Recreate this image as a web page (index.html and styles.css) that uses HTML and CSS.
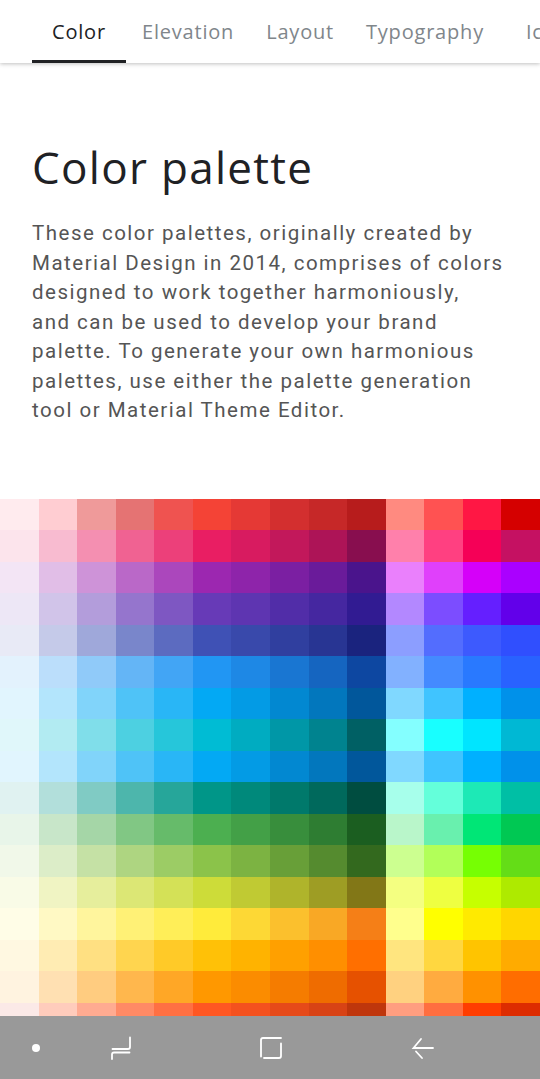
FILE: index.html
```html
<!DOCTYPE html>
<html lang="en">
<head>
<meta charset="utf-8">
<title>Color palette</title>
<link rel="stylesheet" href="styles.css">
</head>
<body>
<header class="tabbar">
  <div class="tab tab-active">Color</div>
  <div class="tab">Elevation</div>
  <div class="tab">Layout</div>
  <div class="tab">Typography</div>
  <div class="tab tab-last">Iconography</div>
</header>
<main class="content">
  <h1 class="title">Color palette</h1>
  <p class="intro">These color palettes, originally created by<br>
  Material Design in 2014, comprises of colors<br>
  designed to work together harmoniously,<br>
  and can be used to develop your brand<br>
  palette. To generate your own harmonious<br>
  palettes, use either the palette generation<br>
  tool or Material Theme Editor.</p>
</main>
<section class="palette" id="palette"></section>
<nav class="sysnav">
  <div class="navbtn nav-dot"><span class="dot"></span></div>
  <div class="navbtn nav-recent">
    <svg width="22" height="24" viewBox="0 0 22 24" fill="none" stroke="#fff" stroke-width="1.8" stroke-linecap="round"><path d="M20 1.5V11Q20 13 18 13H2.5"/><path d="M19.5 16.5H4Q2 16.5 2 18.5V23"/></svg>
  </div>
  <div class="navbtn nav-home">
    <svg width="24" height="24" viewBox="0 0 24 24" fill="none" stroke="#fff" stroke-width="1.8" stroke-linecap="round"><path d="M2 20.5V4Q2 2 4 2H22"/><path d="M22 7.5V20Q22 22 20 22H5"/></svg>
  </div>
  <div class="navbtn nav-back">
    <svg width="24" height="24" viewBox="0 0 24 24" fill="none" stroke="#fff" stroke-width="1.8" stroke-linecap="round"><path d="M22 12H2.5L10 3"/><path d="M5 15.5L11 22"/></svg>
  </div>
</nav>
<script src="script.js"></script>
</body>
</html>
```
FILE: styles.css
```css
html, body {
  margin: 0;
  padding: 0;
  background: #fff;
}
body {
  width: 540px;
  height: 1079px;
  overflow: hidden;
  font-family: Roboto, "Liberation Sans", sans-serif;
}
.tabbar {
  height: 63px;
  display: flex;
  padding-left: 32px;
  overflow: hidden;
  white-space: nowrap;
  box-shadow: 0 1px 4px rgba(0,0,0,0.25);
  position: relative;
  z-index: 1;
  background: #fff;
}
.tab {
  flex: none;
  padding: 0 16px;
  font-family: "Open Sans", sans-serif;
  font-size: 20px;
  letter-spacing: 0.8px;
  color: #80868b;
  line-height: 63px;
  box-sizing: border-box;
}
.tab-active {
  color: #202124;
  min-width: 94px;
  text-align: center;
  padding: 0 17px;
  box-shadow: inset 0 -3px 0 #202124;
}
.tab-last {
  padding-left: 26px;
}
.content {
  padding: 78px 16px 73px 32px;
}
.title {
  margin: 0;
  font-family: "Open Sans", sans-serif;
  font-weight: 400;
  font-size: 44px;
  line-height: 52px;
  letter-spacing: 1.3px;
  color: #202124;
}
.intro {
  margin: 26px 0 0;
  font-size: 20.5px;
  line-height: 29.5px;
  letter-spacing: 1.5px;
  color: #555;
  white-space: nowrap;
}
.palette {
  display: grid;
  grid-template-columns: repeat(14, 1fr);
  grid-auto-rows: 31.5px;
}
.sysnav {
  position: fixed;
  left: 0;
  right: 0;
  bottom: 0;
  height: 63px;
  background: #999;
  display: grid;
  grid-template-columns: 72px 98px 202px 102px;
  align-items: center;
  justify-items: center;
}
.navbtn {
  display: flex;
  align-items: center;
  justify-content: center;
}
.dot {
  width: 8px;
  height: 8px;
  border-radius: 50%;
  background: #fff;
}
```
FILE: script.js
```js
var palette = {
  red: ["FFEBEE","FFCDD2","EF9A9A","E57373","EF5350","F44336","E53935","D32F2F","C62828","B71C1C","FF8A80","FF5252","FF1744","D50000"],
  pink: ["FCE4EC","F8BBD0","F48FB1","F06292","EC407A","E91E63","D81B60","C2185B","AD1457","880E4F","FF80AB","FF4081","F50057","C51162"],
  purple: ["F3E5F5","E1BEE7","CE93D8","BA68C8","AB47BC","9C27B0","8E24AA","7B1FA2","6A1B9A","4A148C","EA80FC","E040FB","D500F9","AA00FF"],
  deepPurple: ["EDE7F6","D1C4E9","B39DDB","9575CD","7E57C2","673AB7","5E35B1","512DA8","4527A0","311B92","B388FF","7C4DFF","651FFF","6200EA"],
  indigo: ["E8EAF6","C5CAE9","9FA8DA","7986CB","5C6BC0","3F51B5","3949AB","303F9F","283593","1A237E","8C9EFF","536DFE","3D5AFE","304FFE"],
  blue: ["E3F2FD","BBDEFB","90CAF9","64B5F6","42A5F5","2196F3","1E88E5","1976D2","1565C0","0D47A1","82B1FF","448AFF","2979FF","2962FF"],
  lightBlue: ["E1F5FE","B3E5FC","81D4FA","4FC3F7","29B6F6","03A9F4","039BE5","0288D1","0277BD","01579B","80D8FF","40C4FF","00B0FF","0091EA"],
  cyan: ["E0F7FA","B2EBF2","80DEEA","4DD0E1","26C6DA","00BCD4","00ACC1","0097A7","00838F","006064","84FFFF","18FFFF","00E5FF","00B8D4"],
  teal: ["E0F2F1","B2DFDB","80CBC4","4DB6AC","26A69A","009688","00897B","00796B","00695C","004D40","A7FFEB","64FFDA","1DE9B6","00BFA5"],
  green: ["E8F5E9","C8E6C9","A5D6A7","81C784","66BB6A","4CAF50","43A047","388E3C","2E7D32","1B5E20","B9F6CA","69F0AE","00E676","00C853"],
  lightGreen: ["F1F8E9","DCEDC8","C5E1A5","AED581","9CCC65","8BC34A","7CB342","689F38","558B2F","33691E","CCFF90","B2FF59","76FF03","64DD17"],
  lime: ["F9FBE7","F0F4C3","E6EE9C","DCE775","D4E157","CDDC39","C0CA33","AFB42B","9E9D24","827717","F4FF81","EEFF41","C6FF00","AEEA00"],
  yellow: ["FFFDE7","FFF9C4","FFF59D","FFF176","FFEE58","FFEB3B","FDD835","FBC02D","F9A825","F57F17","FFFF8D","FFFF00","FFEA00","FFD600"],
  amber: ["FFF8E1","FFECB3","FFE082","FFD54F","FFCA28","FFC107","FFB300","FFA000","FF8F00","FF6F00","FFE57F","FFD740","FFC400","FFAB00"],
  orange: ["FFF3E0","FFE0B2","FFCC80","FFB74D","FFA726","FF9800","FB8C00","F57C00","EF6C00","E65100","FFD180","FFAB40","FF9100","FF6D00"],
  deepOrange: ["FBE9E7","FFCCBC","FFAB91","FF8A65","FF7043","FF5722","F4511E","E64A19","D84315","BF360C","FF9E80","FF6E40","FF3D00","DD2C00"]
};
var order = ["red","pink","purple","deepPurple","indigo","blue","lightBlue","cyan","lightBlue","teal","green","lightGreen","lime","yellow","amber","orange","deepOrange"];
var grid = document.getElementById("palette");
order.forEach(function (name) {
  palette[name].forEach(function (hex) {
    var cell = document.createElement("div");
    cell.className = "swatch";
    cell.style.background = "#" + hex;
    grid.appendChild(cell);
  });
});
```
